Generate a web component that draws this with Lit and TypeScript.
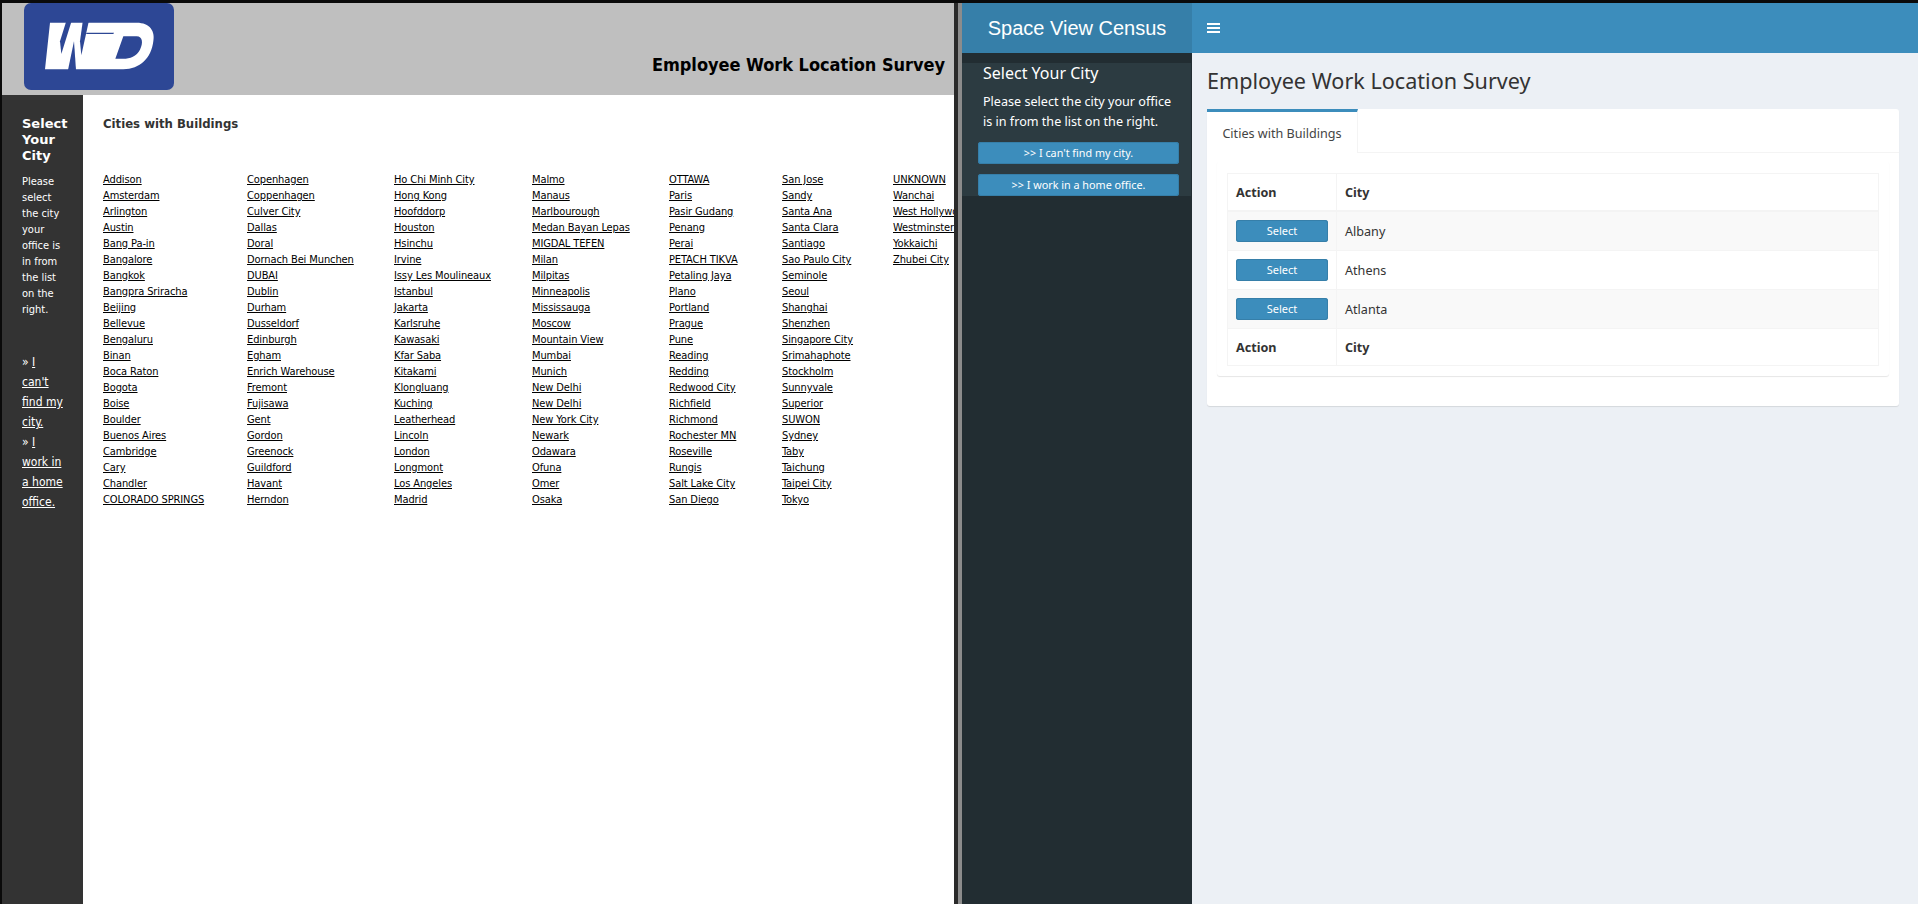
import { LitElement, html, css, svg } from "lit";
import { customElement } from "lit/decorators.js";

const COLUMNS: string[][] = [
  ["Addison", "Amsterdam", "Arlington", "Austin", "Bang Pa-in", "Bangalore", "Bangkok", "Bangpra Sriracha", "Beijing", "Bellevue", "Bengaluru", "Binan", "Boca Raton", "Bogota", "Boise", "Boulder", "Buenos Aires", "Cambridge", "Cary", "Chandler", "COLORADO SPRINGS"],
  ["Copenhagen", "Coppenhagen", "Culver City", "Dallas", "Doral", "Dornach Bei Munchen", "DUBAI", "Dublin", "Durham", "Dusseldorf", "Edinburgh", "Egham", "Enrich Warehouse", "Fremont", "Fujisawa", "Gent", "Gordon", "Greenock", "Guildford", "Havant", "Herndon"],
  ["Ho Chi Minh City", "Hong Kong", "Hoofddorp", "Houston", "Hsinchu", "Irvine", "Issy Les Moulineaux", "Istanbul", "Jakarta", "Karlsruhe", "Kawasaki", "Kfar Saba", "Kitakami", "Klongluang", "Kuching", "Leatherhead", "Lincoln", "London", "Longmont", "Los Angeles", "Madrid"],
  ["Malmo", "Manaus", "Marlbourough", "Medan Bayan Lepas", "MIGDAL TEFEN", "Milan", "Milpitas", "Minneapolis", "Mississauga", "Moscow", "Mountain View", "Mumbai", "Munich", "New Delhi", "New Delhi", "New York City", "Newark", "Odawara", "Ofuna", "Omer", "Osaka"],
  ["OTTAWA", "Paris", "Pasir Gudang", "Penang", "Perai", "PETACH TIKVA", "Petaling Jaya", "Plano", "Portland", "Prague", "Pune", "Reading", "Redding", "Redwood City", "Richfield", "Richmond", "Rochester MN", "Roseville", "Rungis", "Salt Lake City", "San Diego"],
  ["San Jose", "Sandy", "Santa Ana", "Santa Clara", "Santiago", "Sao Paulo City", "Seminole", "Seoul", "Shanghai", "Shenzhen", "Singapore City", "Srimahaphote", "Stockholm", "Sunnyvale", "Superior", "SUWON", "Sydney", "Taby", "Taichung", "Taipei City", "Tokyo"],
  ["UNKNOWN", "Wanchai", "West Hollywood", "Westminster", "Yokkaichi", "Zhubei City"],
];

const CITIES = ["Albany", "Athens", "Atlanta"];

// WD mark: white block with the W wedges and the D counter cut out in the badge blue
const wdLogo = svg`<svg class="logo" viewBox="0 0 150 87" width="150" height="87">
  <rect x="0" y="0" width="150" height="87" rx="7" fill="#2d4795"/>
  <g transform="translate(16 15) scale(0.3333)">
    <path fill="#fff" d="M30 14H290C330 14 346 40 340 70C334 120 300 154 250 154H15Z"/>
    <path fill="#2d4795" d="M78 12H94L64 108L60 70Z"/>
    <path fill="#2d4795" d="M84 156L102 70L108 156Z"/>
    <path fill="#2d4795" d="M128 12H146L124 112L120 70Z"/>
    <path fill="#2d4795" d="M140 44H222L220 48H138Z"/>
    <path fill="#2d4795" d="M250 55H290C308 55 310 75 300 95C290 115 270 122 250 122H226Z"/>
  </g>
</svg>`;

@customElement("app-root")
export class AppRoot extends LitElement {
  static styles = css`
    :host {
      display: block;
      height: 904px;
      overflow: hidden;
      background: #0a0a0a;
    }
    a { color: inherit; }

    .screen {
      display: flex;
      height: 901px;
      padding: 3px 0 0 2px;
    }
    .old {
      width: 952px;
      flex: none;
      display: flex;
      flex-direction: column;
      overflow: hidden;
      font-family: "DejaVu Sans Condensed", "DejaVu Sans", sans-serif;
      background: #fff;
    }
    .divider {
      width: 8px;
      flex: none;
      background: linear-gradient(to right, #2a2a2a 0 4px, #8c8c8c 4px 8px);
    }
    .new {
      flex: 1;
      min-width: 0;
      display: grid;
      grid-template-columns: 230px 1fr;
      grid-template-rows: 50px 1fr;
      font-family: "Noto Sans", sans-serif;
    }

    /* old app */
    .old-head {
      height: 92px;
      flex: none;
      background: #bfbfbf;
      display: flex;
      justify-content: space-between;
      align-items: flex-start;
      padding: 0 9px 0 22px;
    }
    .logo { display: block; }
    .old-title {
      margin-top: 50px;
      font-size: 18px;
      line-height: 24px;
      font-weight: bold;
      letter-spacing: -0.03px;
      color: #000;
    }
    .old-body { flex: 1; display: flex; min-height: 0; }
    .old-side {
      width: 81px;
      flex: none;
      box-sizing: border-box;
      background: #333;
      color: #fff;
      padding: 21px 0 0 20px;
      font-size: 11px;
      line-height: 16px;
      white-space: nowrap;
    }
    .old-side h2 {
      margin: 0 0 10px;
      color: #fff;
      font-family: "DejaVu Sans", sans-serif;
      font-size: 13px;
      line-height: 16px;
    }
    .old-side p { margin: 0 0 34px; }
    .old-links { font-size: 12px; line-height: 20px; }
    .old-main { flex: 1; min-width: 0; padding: 21px 0 0 20px; overflow: hidden; }
    .old-main h3 {
      margin: 0 0 40px;
      font-size: 13px;
      line-height: 16px;
      color: #333;
    }
    .old-cols {
      display: grid;
      grid-template-columns: 144px 147px 138px 137px 113px 111px 80px;
      font-size: 11px;
      line-height: 16px;
      letter-spacing: -0.1px;
      color: #000;
    }
    .old-cols a { display: block; white-space: nowrap; }

    /* new app */
    .brand {
      background: #367fa9;
      color: #fff;
      font: 20px/50px "Liberation Sans", sans-serif;
      text-align: center;
    }
    .nav { background: #3c8dbc; display: flex; align-items: center; padding-left: 15px; }
    .side { background: #222d32; padding-top: 10px; }
    .side-panel {
      background: #2c3b41;
      padding: 0 12px 0 16px;
      margin-right: 1px;
      color: #fff;
      height: 133px;
    }
    .side-panel h4 {
      margin: 0 0 9px;
      padding-left: 5px;
      font-size: 16px;
      font-weight: 400;
      line-height: 20px;
    }
    .side-panel p {
      margin: 0 0 10px;
      padding-left: 5px;
      font-size: 12.6px;
      line-height: 20px;
      white-space: nowrap;
    }
    .side-btn {
      height: 22px;
      line-height: 22px;
      margin-bottom: 10px;
      border-radius: 3px;
      background: #3c8dbc;
      font-size: 10.8px;
      text-align: center;
      width: 201px;
      box-shadow: inset 0 0 0 1px #367fa9;
    }
    .content { background: #ecf0f5; padding: 14px 19px 0 15px; color: #333; }
    .content h1 {
      margin: 0 0 14px;
      font-size: 21.6px;
      font-weight: 400;
      line-height: 28px;
    }
    .tabs {
      background: #fff;
      border-radius: 3px;
      height: 297px;
      box-shadow: 0 1px 1px rgba(0, 0, 0, 0.1);
    }
    .tab-head { height: 43px; border-bottom: 1px solid #f4f4f4; }
    .tab {
      width: 151px;
      height: 44px;
      box-sizing: border-box;
      border-top: 3px solid #3c8dbc;
      border-right: 1px solid #f4f4f4;
      background: #fff;
      color: #444;
      font-size: 12.6px;
      line-height: 43px;
      text-align: center;
    }
    .panel {
      margin: 8px 10px 0;
      height: 215px;
      box-sizing: border-box;
      padding: 12px 10px 0;
      border-radius: 3px;
      box-shadow: 0 1px 1px rgba(0, 0, 0, 0.1);
    }
    table {
      width: 100%;
      border-collapse: collapse;
      font-size: 12.6px;
      border: 1px solid #f4f4f4;
    }
    th, td { border: 1px solid #f4f4f4; padding: 0 8px; text-align: left; }
    th { height: 36px; font-weight: 700; }
    thead th { border-bottom-width: 2px; }
    td { height: 38px; }
    tbody tr:nth-child(odd) { background: #f9f9f9; }
    .col-action { width: 92px; }
    .select {
      width: 92px;
      height: 22px;
      line-height: 22px;
      border-radius: 3px;
      background: #3c8dbc;
      box-shadow: inset 0 0 0 1px #367fa9;
      color: #fff;
      font-size: 11px;
      text-align: center;
    }
  `;

  render() {
    return html`
      <div class="screen">
        <section class="old">
          <header class="old-head">
            ${wdLogo}
            <div class="old-title">Employee Work Location Survey</div>
          </header>
          <div class="old-body">
            <aside class="old-side">
              <h2>Select<br />Your<br />City</h2>
              <p>Please<br />select<br />the city<br />your<br />office is<br />in from<br />the list<br />on the<br />right.</p>
              <div class="old-links">
                » <a href="#">I<br />can't<br />find my<br />city.</a><br />
                » <a href="#">I<br />work in<br />a home<br />office.</a>
              </div>
            </aside>
            <main class="old-main">
              <h3>Cities with Buildings</h3>
              <div class="old-cols">
                ${COLUMNS.map(
                  (col) => html`<div>${col.map((c) => html`<a href="#">${c}</a>`)}</div>`
                )}
              </div>
            </main>
          </div>
        </section>
        <div class="divider"></div>
        <section class="new">
          <div class="brand">Space View Census</div>
          <div class="nav">
            <svg width="13" height="10" viewBox="0 0 13 10" fill="#fff">
              <rect y="0" width="13" height="2" />
              <rect y="4" width="13" height="2" />
              <rect y="8" width="13" height="2" />
            </svg>
          </div>
          <aside class="side">
            <div class="side-panel">
              <h4>Select Your City</h4>
              <p>Please select the city your office<br />is in from the list on the right.</p>
              <div class="side-btn">&gt;&gt; I can't find my city.</div>
              <div class="side-btn">&gt;&gt; I work in a home office.</div>
            </div>
          </aside>
          <main class="content">
            <h1>Employee Work Location Survey</h1>
            <div class="tabs">
              <div class="tab-head"><div class="tab">Cities with Buildings</div></div>
              <div class="panel">
                <table>
                  <thead>
                    <tr><th class="col-action">Action</th><th>City</th></tr>
                  </thead>
                  <tbody>
                    ${CITIES.map(
                      (c) => html`<tr><td><div class="select">Select</div></td><td>${c}</td></tr>`
                    )}
                  </tbody>
                  <tfoot>
                    <tr><th>Action</th><th>City</th></tr>
                  </tfoot>
                </table>
              </div>
            </div>
          </main>
        </section>
      </div>
    `;
  }
}
